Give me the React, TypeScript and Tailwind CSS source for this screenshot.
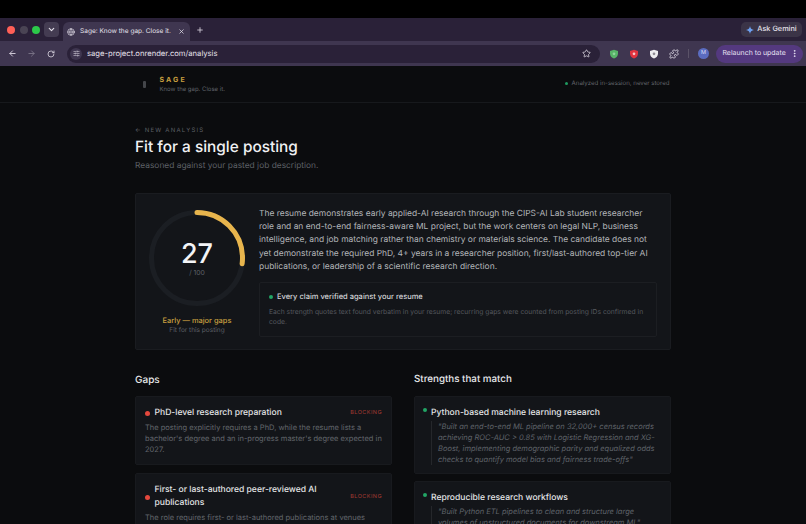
import React from 'react';
import { ArrowLeft, ArrowRight, ChevronDown, Globe, Plus, RotateCw, SlidersHorizontal, Star, X, Puzzle, MoreVertical } from 'lucide-react';

const Shield = ({ fill, mark }: { fill: string; mark: string }) => (
  <svg width="10" height="10" viewBox="0 0 12 12">
    <path d="M6 .8 10.8 2.4v3.4c0 2.8-2 4.6-4.8 5.6C3.2 10.4 1.2 8.6 1.2 5.8V2.4z" fill={fill} />
    <circle cx="6" cy="5.8" r="1.6" fill={mark} />
  </svg>
);

const BrowserChrome = () => (
  <div className="shrink-0">
    <div className="h-[18px] bg-black" />
    <div className="h-[23px] bg-[#2a2138] flex items-center pl-[7px]">
      <div className="flex items-center gap-[4.5px]">
        <span className="size-[8px] rounded-full bg-[#ff5f57]" />
        <span className="size-[8px] rounded-full bg-[#4a4454]" />
        <span className="size-[8px] rounded-full bg-[#2cc84a]" />
      </div>
      <div className="ml-[4px] size-[15px] rounded-[4px] bg-[#443c52] flex items-center justify-center text-[#e6e2ec]">
        <ChevronDown size={9} strokeWidth={3} />
      </div>
      <div className="ml-[4px] self-end h-[19px] w-[127px] rounded-t-[6px] bg-[#3f3650] flex items-center pl-[4px] pr-[5px] text-[#e4e0ea]">
        <Globe size={8} />
        <span className="ml-[5px] text-[6.55px] whitespace-nowrap">Sage: Know the gap. Close it.</span>
        <X size={7} className="ml-auto" strokeWidth={2.5} />
      </div>
      <Plus size={8} className="ml-[6px] text-[#d8d3df]" strokeWidth={2.5} />
      <div className="ml-auto mr-[4px] h-[15px] w-[61px] rounded-[5px] bg-[#3b3447] flex items-center justify-center gap-[3px] text-[#e6e2ec]">
        <svg width="8" height="8" viewBox="0 0 10 10">
          <path d="M5 0C5.3 3 7 4.7 10 5 7 5.3 5.3 7 5 10 4.7 7 3 5.3 0 5 3 4.7 4.7 3 5 0z" fill="#6ea0f0" />
        </svg>
        <span className="text-[7.3px] font-medium whitespace-nowrap">Ask Gemini</span>
      </div>
    </div>
    <div className="h-[25px] bg-[#3f3650] flex items-center pl-[8px] text-[#d5d0dc]">
      <ArrowLeft size={9} strokeWidth={2.5} />
      <ArrowRight size={9} strokeWidth={2.5} className="ml-[10px] text-[#7a7386]" />
      <RotateCw size={8} strokeWidth={2.5} className="ml-[11px]" />
      <div className="ml-[12px] h-[18px] w-[533px] rounded-full bg-[#2a2138] flex items-center pl-[3px] pr-[9px]">
        <span className="size-[12px] rounded-full bg-[#3f3650] flex items-center justify-center">
          <SlidersHorizontal size={7} />
        </span>
        <span className="ml-[5px] text-[7.65px] text-[#e4e0ea] whitespace-nowrap">sage-project.onrender.com/analysis</span>
        <Star size={9} strokeWidth={2} className="ml-auto text-[#e4e0ea]" />
      </div>
      <div className="ml-[9px] flex items-center gap-[10px]">
        <Shield fill="#58b368" mark="#8fd49b" />
        <Shield fill="#e0343f" mark="#f6c9cc" />
        <Shield fill="#ecebee" mark="#8d8a93" />
        <Puzzle size={10} strokeWidth={2} className="text-[#e4e0ea]" />
      </div>
      <span className="ml-[9px] w-px h-[9px] bg-[#5b5368]" />
      <span className="ml-[9px] size-[11px] rounded-full bg-[#5b6cc0] flex items-center justify-center text-[5.5px] text-[#d6dcf6]">M</span>
      <div className="ml-[6.5px] h-[18px] w-[87px] rounded-full bg-[#54397f] flex items-center pl-[7px] pr-[4px] text-[#e6e0f2]">
        <span className="text-[6.95px] whitespace-nowrap">Relaunch to update</span>
        <MoreVertical size={9} strokeWidth={2.5} className="ml-auto" />
      </div>
    </div>
  </div>
);

const ScoreRing = () => {
  const r = 45.5;
  const c = 2 * Math.PI * r;
  return (
    <div className="relative size-[98px]">
      <svg width="98" height="98" viewBox="0 0 98 98" className="-rotate-90">
        <circle cx="49" cy="49" r={r} fill="none" stroke="#1b1e23" strokeWidth="5" />
        <circle cx="49" cy="49" r={r} fill="none" stroke="#e8b54d" strokeWidth="5" strokeLinecap="round" strokeDasharray={`${c * 0.27} ${c}`} />
      </svg>
      <div className="absolute inset-0 flex flex-col items-center justify-center">
        <span className="text-[27px] leading-[28px] font-medium text-[#f3f4f6]">27</span>
        <span className="text-[6.8px] leading-[9px] text-[#5c6067]">/ 100</span>
      </div>
    </div>
  );
};

const GapCard = ({ title, body }: { title: string; body: string }) => (
  <div className="bg-[#131519] border border-[#181a1e] rounded-[2px] px-[9px] pt-[10px] pb-[9px]">
    <div className="flex items-center">
      <span className="size-[5px] rounded-full bg-[#e5483d] shrink-0" />
      <span className="ml-[4.5px] text-[8.55px] leading-[13px] font-medium text-[#e3e4e6] w-[185px]">{title}</span>
      <span className="ml-auto text-[5.5px] tracking-[0.08em] text-[#a23a32]">BLOCKING</span>
    </div>
    <p className="mt-[2px] text-[7.5px] leading-[11px] text-[#62666c]">{body}</p>
  </div>
);

const StrengthCard = ({ title, quote }: { title: string; quote: string }) => (
  <div className="bg-[#131519] border border-[#181a1e] rounded-[2px] pl-[8px] pr-[10px] pt-[10px] pb-[8px]">
    <div className="flex items-start">
      <span className="mt-[1px] size-[3.5px] rounded-full bg-[#22a565] shrink-0" />
      <span className="ml-[4.5px] text-[8.55px] leading-[13px] font-medium text-[#e3e4e6]">{title}</span>
    </div>
    <p className="mt-[1px] ml-[8px] pl-[6px] border-l border-[#25272b] text-[7.5px] leading-[11px] italic text-[#5f6369]">{quote}</p>
  </div>
);

export default function App() {
  return (
    <div className="h-[524px] w-[806px] overflow-hidden flex flex-col bg-[#0b0c0e] font-['Inter',sans-serif] [text-rendering:geometricPrecision] antialiased">
      <BrowserChrome />
      <main className="flex-1 min-h-0 overflow-hidden">
        <header className="h-[37px] border-b border-[#17191c] flex justify-center">
          <div className="w-[535px] pr-[1px] flex items-center">
            <span className="ml-[7px] w-[3px] h-[7px] bg-[#44464a] rounded-[1px]" />
            <div className="ml-[14px]">
              <div className="text-[7px] leading-[9px] font-bold tracking-[0.3em] text-[#c9a040]">SAGE</div>
              <div className="mt-[1px] text-[6px] leading-[9px] text-[#5f6268]">Know the gap. Close it.</div>
            </div>
            <div className="ml-auto flex items-center">
              <span className="size-[3px] rounded-full bg-[#1f9a60]" />
              <span className="ml-[4px] text-[6.1px] text-[#63666c]">Analyzed in-session, never stored</span>
            </div>
          </div>
        </header>

        <div className="w-[536px] mx-auto pt-[23px]">
          <div className="text-[6px] leading-[9px] tracking-[0.2em] text-[#5c5f65]">← NEW ANALYSIS</div>
          <h1 className="text-[15.4px] leading-[24px] font-medium text-[#f1f2f4]">Fit for a single posting</h1>
          <p className="mt-[1px] text-[8.4px] leading-[13px] text-[#5e6167]">Reasoned against your pasted job description.</p>

          <section className="mt-[20px] h-[157px] bg-[#131519] border border-[#1a1c20] rounded-[2px] flex pl-[12px] pt-[14px]">
            <div className="mt-[1px] w-[98px] flex flex-col items-center">
              <ScoreRing />
              <div className="mt-[8px] text-[7.45px] leading-[11px] font-medium text-[#c9a040] whitespace-nowrap">Early — major gaps</div>
              <div className="text-[6.5px] leading-[9px] text-[#5c5f65] whitespace-nowrap">Fit for this posting</div>
            </div>
            <div className="ml-[13px] w-[398px]">
              <p className="text-[8.43px] leading-[13.2px] text-[#b4b6ba]">
                The resume demonstrates early applied-AI research through the CIPS-AI Lab student researcher role and an end-to-end fairness-aware ML project, but the work centers on legal NLP, business intelligence, and job matching rather than chemistry or materials science. The candidate does not yet demonstrate the required PhD, 4+ years in a researcher position, first/last-authored top-tier AI publications, or leadership of a scientific research direction.
              </p>
              <div className="mt-[8px] border border-[#1c1e22] rounded-[2px] px-[9px] pt-[8px] pb-[8px]">
                <div className="flex items-center">
                  <span className="size-[4px] rounded-full bg-[#22a565]" />
                  <span className="ml-[4px] text-[7.5px] leading-[11px] font-medium text-[#d5d6d9]">Every claim verified against your resume</span>
                </div>
                <p className="mt-[5px] text-[6.75px] leading-[10.4px] text-[#55585e]">
                  Each strength quotes text found verbatim in your resume; recurring gaps were counted from posting IDs confirmed in code.
                </p>
              </div>
            </div>
          </section>

          <div className="mt-[23px] grid grid-cols-[257px_257px] gap-x-[22px]">
            <div>
              <h2 className="text-[10px] leading-[14px] font-medium text-[#e8e9eb]">Gaps</h2>
              <div className="mt-[9px] flex flex-col gap-[8px]">
                <GapCard title="PhD-level research preparation" body="The posting explicitly requires a PhD, while the resume lists a bachelor's degree and an in-progress master's degree expected in 2027." />
                <GapCard title="First- or last-authored peer-reviewed AI publications" body="The role requires first- or last-authored publications at venues" />
              </div>
            </div>
            <div>
              <h2 className="text-[9.8px] leading-[14px] font-medium text-[#e8e9eb]">Strengths that match</h2>
              <div className="mt-[9px] flex flex-col gap-[7px]">
                <StrengthCard title="Python-based machine learning research" quote={'"Built an end-to-end ML pipeline on 32,000+ census records achieving ROC-AUC > 0.85 with Logistic Regression and XG-Boost, implementing demographic parity and equalized odds checks to quantify model bias and fairness trade-offs"'} />
                <StrengthCard title="Reproducible research workflows" quote={'"Built Python ETL pipelines to clean and structure large volumes of unstructured documents for downstream ML"'} />
              </div>
            </div>
          </div>
        </div>
      </main>
    </div>
  );
}
